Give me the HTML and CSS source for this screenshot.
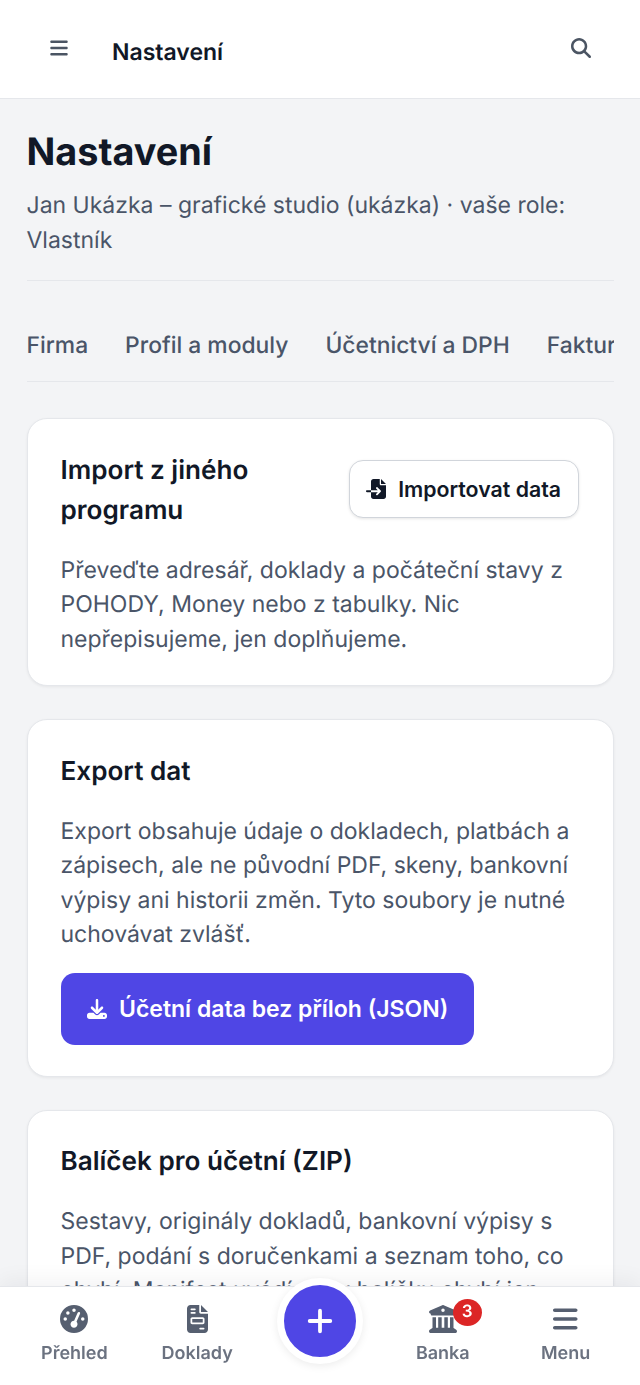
FILE: index.html
```html
<!DOCTYPE html>
<html lang="cs">
<head>
    <meta charset="UTF-8">
    <meta name="viewport" content="width=device-width, initial-scale=1.0">
    <title>Nastavení</title>
    <link rel="stylesheet" href="styles.css">
</head>
<body>
    <header class="topbar">
        <svg class="topbar-menu" viewBox="0 0 448 512"><path d="M0 96C0 78.3 14.3 64 32 64H416c17.7 0 32 14.3 32 32s-14.3 32-32 32H32C14.3 128 0 113.7 0 96zM0 256c0-17.7 14.3-32 32-32H416c17.7 0 32 14.3 32 32s-14.3 32-32 32H32c-17.7 0-32-14.3-32-32zM448 416c0 17.7-14.3 32-32 32H32c-17.7 0-32-14.3-32-32s14.3-32 32-32H416c17.7 0 32 14.3 32 32z"/></svg>
        <span class="topbar-title">Nastavení</span>
        <svg class="topbar-search" viewBox="0 0 512 512"><path d="M416 208c0 45.9-14.9 88.3-40 122.7L502.6 457.4c12.5 12.5 12.5 32.8 0 45.3s-32.8 12.5-45.3 0L330.7 376c-34.4 25.2-76.8 40-122.7 40C93.1 416 0 322.9 0 208S93.1 0 208 0S416 93.1 416 208zM208 352a144 144 0 1 0 0-288 144 144 0 1 0 0 288z"/></svg>
    </header>

    <main class="content">
        <h1>Nastavení</h1>
        <p class="subtitle">Jan Ukázka – grafické studio (ukázka) · vaše role: Vlastník</p>

        <nav class="tabs">
            <span>Firma</span>
            <span>Profil a moduly</span>
            <span>Účetnictví a DPH</span>
            <span>Fakturace</span>
        </nav>

        <section class="card">
            <div class="card-head">
                <h2>Import z jiného programu</h2>
                <button class="btn-light">
                    <svg class="btn-icon" viewBox="0 0 512 512"><path d="M128 64c0-35.3 28.7-64 64-64H352V128c0 17.7 14.3 32 32 32H512V448c0 35.3-28.7 64-64 64H192c-35.3 0-64-28.7-64-64V336H302.1l-39 39c-9.4 9.4-9.4 24.6 0 33.9s24.6 9.4 33.9 0l80-80c9.4-9.4 9.4-24.6 0-33.9l-80-80c-9.4-9.4-24.6-9.4-33.9 0s-9.4 24.6 0 33.9l39 39H128V64zm0 224v48H24c-13.3 0-24-10.7-24-24s10.7-24 24-24H128zM512 128H384V0L512 128z"/></svg>
                    Importovat data
                </button>
            </div>
            <p>Převeďte adresář, doklady a počáteční stavy z POHODY, Money nebo z tabulky. Nic nepřepisujeme, jen doplňujeme.</p>
        </section>

        <section class="card">
            <h2>Export dat</h2>
            <p>Export obsahuje údaje o dokladech, platbách a zápisech, ale ne původní PDF, skeny, bankovní výpisy ani historii změn. Tyto soubory je nutné uchovávat zvlášť.</p>
            <button class="btn-primary">
                <svg class="btn-icon" viewBox="0 0 512 512"><path d="M288 32c0-17.7-14.3-32-32-32s-32 14.3-32 32V274.7l-73.4-73.4c-12.5-12.5-32.8-12.5-45.3 0s-12.5 32.8 0 45.3l128 128c12.5 12.5 32.8 12.5 45.3 0l128-128c12.5-12.5 12.5-32.8 0-45.3s-32.8-12.5-45.3 0L288 274.7V32zM64 352c-35.3 0-64 28.7-64 64v32c0 35.3 28.7 64 64 64H448c35.3 0 64-28.7 64-64V416c0-35.3-28.7-64-64-64H346.5l-45.3 45.3c-25 25-65.5 25-90.5 0L165.5 352H64zm368 56a24 24 0 1 1 0 48 24 24 0 1 1 0-48z"/></svg>
                Účetní data bez příloh (JSON)
            </button>
        </section>

        <section class="card">
            <h2>Balíček pro účetní (ZIP)</h2>
            <p>Sestavy, originály dokladů, bankovní výpisy s PDF, podání s doručenkami a seznam toho, co chybí. Manifest uvádí, že v balíčku chybí jen</p>
        </section>
    </main>

    <nav class="bottom-nav">
        <a class="nav-item">
            <svg viewBox="0 0 512 512"><path d="M0 256a256 256 0 1 1 512 0A256 256 0 1 1 0 256zM288 96a32 32 0 1 0 -64 0 32 32 0 1 0 64 0zM256 416c35.3 0 64-28.7 64-64c0-17.4-6.9-33.1-18.1-44.6L366 161.7c5.3-12.1-.2-26.3-12.3-31.6s-26.3 .2-31.6 12.3L257.9 288c-.6 0-1.3 0-1.9 0c-35.3 0-64 28.7-64 64s28.7 64 64 64zM176 144a32 32 0 1 0 -64 0 32 32 0 1 0 64 0zM96 288a32 32 0 1 0 0-64 32 32 0 1 0 0 64zm352-32a32 32 0 1 0 -64 0 32 32 0 1 0 64 0z"/></svg>
            Přehled
        </a>
        <a class="nav-item">
            <svg viewBox="0 0 384 512"><path d="M64 0C28.7 0 0 28.7 0 64V448c0 35.3 28.7 64 64 64H320c35.3 0 64-28.7 64-64V160H256c-17.7 0-32-14.3-32-32V0H64zM256 0V128H384L256 0zM80 64h64c8.8 0 16 7.2 16 16s-7.2 16-16 16H80c-8.8 0-16-7.2-16-16s7.2-16 16-16zm0 64h64c8.8 0 16 7.2 16 16s-7.2 16-16 16H80c-8.8 0-16-7.2-16-16s7.2-16 16-16zm16 96H288c17.7 0 32 14.3 32 32v64c0 17.7-14.3 32-32 32H96c-17.7 0-32-14.3-32-32V256c0-17.7 14.3-32 32-32zm0 32v64H288V256H96zM240 416h64c8.8 0 16 7.2 16 16s-7.2 16-16 16H240c-8.8 0-16-7.2-16-16s7.2-16 16-16z"/></svg>
            Doklady
        </a>
        <div class="nav-add">
            <button class="fab">
                <svg viewBox="0 0 24 24"><path d="M12 2.5v19M2.5 12h19"/></svg>
            </button>
        </div>
        <a class="nav-item">
            <span class="nav-icon-wrap">
                <svg viewBox="0 0 512 512"><path d="M243.4 2.6l-224 96c-14 6-21.8 21-18.7 35.8S16.8 160 32 160v8c0 13.3 10.7 24 24 24H456c13.3 0 24-10.7 24-24v-8c15.2 0 28.3-10.7 31.3-25.6s-4.8-29.9-18.7-35.8l-224-96c-8-3.4-17.2-3.4-25.2 0zM128 224H64V420.3c-.6 .3-1.2 .7-1.8 1.1l-48 32c-11.7 7.8-17 22.4-12.9 35.9S17.9 512 32 512H480c14.1 0 26.5-9.2 30.6-22.7s-1.1-28.1-12.9-35.9l-48-32c-.6-.4-1.2-.7-1.8-1.1V224H384V416H344V224H280V416H232V224H168V416H128V224zM256 64a32 32 0 1 1 0 64 32 32 0 1 1 0-64z"/></svg>
                <span class="badge">3</span>
            </span>
            Banka
        </a>
        <a class="nav-item">
            <svg viewBox="0 0 448 512"><path d="M0 96C0 78.3 14.3 64 32 64H416c17.7 0 32 14.3 32 32s-14.3 32-32 32H32C14.3 128 0 113.7 0 96zM0 256c0-17.7 14.3-32 32-32H416c17.7 0 32 14.3 32 32s-14.3 32-32 32H32c-17.7 0-32-14.3-32-32zM448 416c0 17.7-14.3 32-32 32H32c-17.7 0-32-14.3-32-32s14.3-32 32-32H416c17.7 0 32 14.3 32 32z"/></svg>
            Menu
        </a>
    </nav>
</body>
</html>
```

FILE: styles.css
```css
html, body {
    height: 100%;
}
body {
    margin: 0;
    overflow: hidden;
    font-family: Inter, "Noto Sans", sans-serif;
    text-rendering: geometricPrecision;
    background-color: #f3f4f6;
    color: #111827;
}
svg {
    fill: currentColor;
    display: block;
}
.topbar {
    display: flex;
    align-items: center;
    height: 98px;
    padding: 0 49px 0 50px;
    background-color: white;
    border-bottom: 1px solid #e5e7eb;
}
.topbar-menu {
    width: 18px;
    height: 20px;
    color: #4b5563;
    margin-top: -2px;
}
.topbar-title {
    margin-left: 44px;
    font-size: 23px;
    font-weight: 600;
    flex: 1;
    padding-top: 5px;
}
.topbar-search {
    width: 20px;
    height: 20px;
    color: #4b5563;
    margin-top: -2px;
}
.content {
    padding: 30px 26.5px 0;
}
h1 {
    margin: 0;
    font-size: 37.8px;
    line-height: 46px;
    font-weight: 700;
}
.subtitle {
    margin: 13px 0 0;
    padding-bottom: 23px;
    font-size: 23px;
    line-height: 34.5px;
    color: #4a5568;
    border-bottom: 1px solid #e5e7eb;
}
.tabs {
    display: flex;
    gap: 37px;
    overflow: hidden;
    height: 78px;
    padding-bottom: 22px;
    align-items: flex-end;
    border-bottom: 1px solid #e5e7eb;
    font-size: 22.85px;
    font-weight: 500;
    color: #4a5568;
    white-space: nowrap;
}
.card {
    margin-top: 33px;
    padding: 31.5px 33px 29px;
    background-color: white;
    border: 1px solid #e5e7eb;
    border-radius: 20px;
    box-shadow: 0 1px 3px rgba(0, 0, 0, 0.06);
}
.tabs + .card {
    margin-top: 36px;
}
.card-head {
    display: flex;
    justify-content: space-between;
    gap: 24px;
    align-items: center;
}
.card h2 {
    margin: 0;
    font-size: 26.1px;
    line-height: 40px;
    font-weight: 600;
}
.card p {
    margin: 22px 0 0;
    font-size: 23px;
    line-height: 34.5px;
    color: #4a5568;
}
.card-head .btn-light {
    margin: -3px 1px 0 0;
}
.btn-icon {
    width: 20px;
    height: 20px;
    flex: none;
}
.btn-light {
    display: flex;
    align-items: center;
    gap: 12px;
    flex: none;
    height: 58px;
    padding: 0 16.5px;
    font-family: inherit;
    font-size: 21.3px;
    font-weight: 600;
    color: #111827;
    background-color: white;
    border: 1px solid #d1d5db;
    border-radius: 14px;
    box-shadow: 0 1px 3px rgba(0, 0, 0, 0.1);
}
.btn-primary {
    display: flex;
    align-items: center;
    gap: 12.5px;
    height: 72px;
    margin-top: 21.5px;
    margin-bottom: 1.5px;
    padding: 0 26px;
    font-family: inherit;
    font-size: 23px;
    font-weight: 600;
    color: white;
    background-color: #4f46e5;
    border: none;
    border-radius: 14px;
}
.bottom-nav {
    position: fixed;
    left: 0;
    right: 0;
    bottom: 0;
    height: 98px;
    padding: 0 13px;
    display: grid;
    grid-template-columns: repeat(5, 1fr);
    background-color: white;
    border-top: 1px solid #e5e7eb;
    box-shadow: 0 -6px 20px rgba(15, 23, 42, 0.05);
}
.nav-item {
    display: flex;
    flex-direction: column;
    align-items: center;
    gap: 9.5px;
    padding-top: 18px;
    font-size: 18px;
    line-height: 22px;
    font-weight: 600;
    color: #6b7280;
}
.nav-item svg {
    height: 28px;
    color: #565f70;
}
.nav-icon-wrap {
    position: relative;
    display: block;
}
.badge {
    position: absolute;
    top: -6px;
    right: -25px;
    width: 29px;
    height: 27px;
    border-radius: 50%;
    background-color: #dc2626;
    color: white;
    font-size: 17px;
    line-height: 27px;
    font-weight: 600;
    text-align: center;
}
.nav-add {
    position: relative;
}
.fab {
    position: absolute;
    left: 50%;
    top: -9px;
    width: 86px;
    height: 86px;
    margin-left: -43px;
    padding: 0;
    display: flex;
    align-items: center;
    justify-content: center;
    background-color: #4f46e5;
    border: 7px solid white;
    border-radius: 50%;
    box-shadow: 0 2px 8px rgba(0, 0, 0, 0.08);
}
.fab svg {
    width: 26px;
    height: 26px;
    fill: none;
    stroke: white;
    stroke-width: 3.5;
    stroke-linecap: round;
}
```
